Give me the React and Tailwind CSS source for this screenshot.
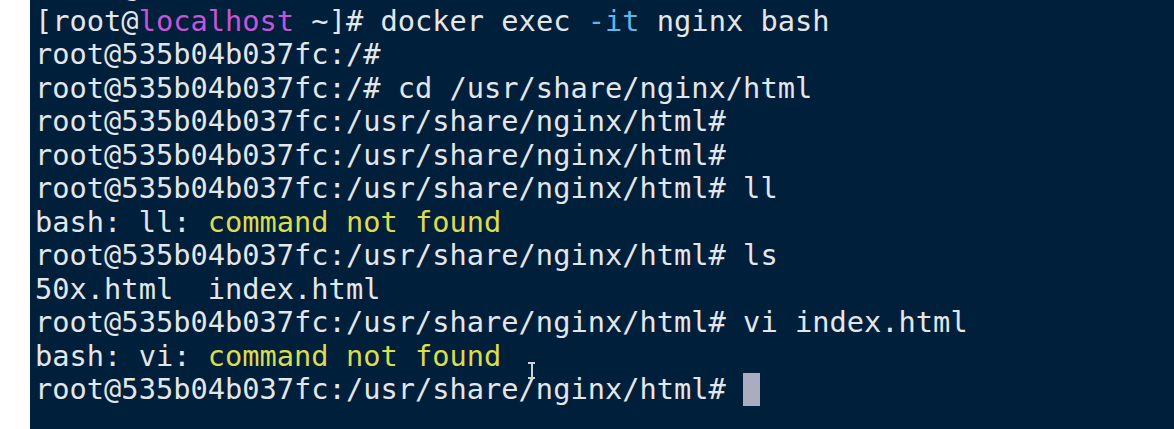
import React from 'react';

const lines = [
    [['[root@', 'w'], ['localhost', 'm'], [' ~]# docker exec ', 'w'], ['-it', 'b'], [' nginx bash', 'w']],
    [['root@535b04b037fc:/#', 'w']],
    [['root@535b04b037fc:/# cd /usr/share/nginx/html', 'w']],
    [['root@535b04b037fc:/usr/share/nginx/html#', 'w']],
    [['root@535b04b037fc:/usr/share/nginx/html#', 'w']],
    [['root@535b04b037fc:/usr/share/nginx/html# ll', 'w']],
    [['bash: ll: ', 'w'], ['command not found', 'y']],
    [['root@535b04b037fc:/usr/share/nginx/html# ls', 'w']],
    [['50x.html  index.html', 'w']],
    [['root@535b04b037fc:/usr/share/nginx/html# vi index.html', 'w']],
    [['bash: vi: ', 'w'], ['command not found', 'y']],
];

const colors = {
    w: 'text-[#e4e6ea]',
    m: 'text-[#c655d6]',
    b: 'text-[#5db8e6]',
    y: 'text-[#dcdc4e]',
};

const Terminal = () => {
    return (
        <div className="w-[1174px] h-[429px] flex bg-white overflow-hidden">
            <div className="w-[30px] shrink-0 bg-white" />
            <div
                className="relative flex-1 bg-[#001f3a] pl-[5px] overflow-hidden text-[28.7px] leading-[33.5px] whitespace-pre"
                style={{ fontFamily: '"DejaVu Sans Mono", monospace' }}
            >
                <div className="mt-[-29px]">
                    {/* clipped line above */}
                    <div className="text-[#e4e6ea]">[root@<span className="text-[#c655d6]">localhost</span> ~]#</div>
                    {lines.map((line, i) => (
                        <div key={i}>
                            {line.map(([t, c], j) => (
                                <span key={j} className={colors[c]}>{t}</span>
                            ))}
                        </div>
                    ))}
                    <div className="flex items-center text-[#e4e6ea]">
                        <span>root@535b04b037fc:/usr/share/nginx/html# </span>
                        <span className="inline-block w-[17px] h-[33px] bg-[#a9adbf]" />
                    </div>
                </div>
                {/* mouse I-beam */}
                <div className="absolute left-[498px] top-[362px] w-[7px] h-[17px] flex flex-col items-center">
                    <div className="w-[7px] h-[2px] bg-[#cfd2d8]" />
                    <div className="w-[2px] flex-1 bg-[#cfd2d8]" />
                    <div className="w-[7px] h-[2px] bg-[#cfd2d8]" />
                </div>
            </div>
        </div>
    );
};

export default function App() {
    return <Terminal />;
}
